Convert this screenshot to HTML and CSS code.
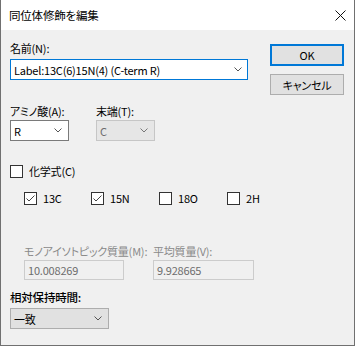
FILE: index.html
```html
<!DOCTYPE html>
<html lang="ja">
<head>
<meta charset="UTF-8"/>
<link rel="stylesheet" href="styles.css">
</head>
<body>
<div class="window">
  <div class="titlebar">
    <span class="title">同位体修飾を編集</span>
    <svg class="close" width="11" height="11" viewBox="0 0 11 11"><path d="M0.5 0.5L10.5 10.5M10.5 0.5L0.5 10.5" stroke="#111" stroke-width="1"/></svg>
  </div>
  <div class="content">
    <div class="toprow">
      <div class="namecol">
        <div class="label">名前(N):</div>
        <div class="combo edit focused">
          <span class="value">Label:13C(6)15N(4) (C-term R)</span>
          <svg class="chev" width="8" height="5" viewBox="0 0 8 5"><path d="M0.5 0.5L4 4L7.5 0.5" fill="none" stroke="#555"/></svg>
        </div>
      </div>
      <div class="buttons">
        <div class="btn default">OK</div>
        <div class="btn">キャンセル</div>
      </div>
    </div>

    <div class="selrow">
      <div class="field">
        <div class="label">アミノ酸(A):</div>
        <div class="combo small edit">
          <span class="value">R</span>
          <svg class="chev" width="8" height="5" viewBox="0 0 8 5"><path d="M0.5 0.5L4 4L7.5 0.5" fill="none" stroke="#555"/></svg>
        </div>
      </div>
      <div class="field">
        <div class="label">末端(T):</div>
        <div class="combo small disabled">
          <span class="value">C</span>
          <svg class="chev" width="8" height="5" viewBox="0 0 8 5"><path d="M0.5 0.5L4 4L7.5 0.5" fill="none" stroke="#777"/></svg>
        </div>
      </div>
    </div>

    <div class="check formula">
      <span class="box"></span>
      <span>化学式(C)</span>
    </div>

    <div class="isotopes">
      <div class="check"><span class="box"><svg width="11" height="11" viewBox="0 0 11 11"><path d="M1.5 5.5L4 8L9.5 2.5" fill="none" stroke="#444" stroke-width="1"/></svg></span><span>13C</span></div>
      <div class="check"><span class="box"><svg width="11" height="11" viewBox="0 0 11 11"><path d="M1.5 5.5L4 8L9.5 2.5" fill="none" stroke="#444" stroke-width="1"/></svg></span><span>15N</span></div>
      <div class="check"><span class="box"></span><span>18O</span></div>
      <div class="check"><span class="box"></span><span>2H</span></div>
    </div>

    <div class="massrow">
      <div class="field mono">
        <div class="label dim">モノアイソトピック質量(M):</div>
        <div class="readonly">10.008269</div>
      </div>
      <div class="field avg">
        <div class="label dim">平均質量(V):</div>
        <div class="readonly">9.928665</div>
      </div>
    </div>

    <div class="label strong">相対保持時間:</div>
    <div class="combo drop">
      <span class="value">一致</span>
      <svg class="chev" width="8" height="5" viewBox="0 0 8 5"><path d="M0.5 0.5L4 4L7.5 0.5" fill="none" stroke="#555"/></svg>
    </div>
  </div>
</div>
</body>
</html>
```

FILE: styles.css
```css
html, body {
	margin:0;
	padding:0;
	background:#f0f0f0;
}
body {
	font-family:"Noto Sans CJK JP", "Noto Sans", sans-serif;
	font-size:11px;
	letter-spacing:-0.2px;
	font-feature-settings:"palt";
	color:#000;
}
.window {
	width:355px;
	height:346px;
	box-sizing:border-box;
	border:1px solid #707070;
	border-top:none;
	background:#f0f0f0;
}
.titlebar {
	height:30px;
	background:#fff;
	display:flex;
	align-items:center;
	justify-content:space-between;
	padding:0 8px 0 8px;
}
.title {
	font-size:11.5px;
	margin-top:-1px;
}
.close {
	margin-top:1px;
}
.content {
	padding:0 9px;
}
.label {
	height:16px;
	line-height:16px;
	white-space:nowrap;
}
.label.dim {
	color:#8a8a8a;
}
.label.strong {
	font-weight:500;
	font-size:11.5px;
	margin-top:9px;
}
.toprow {
	display:flex;
	gap:22px;
	height:65px;
}
.namecol {
	width:238px;
	padding-top:10px;
}
.namecol .combo {
	margin-top:3px;
}
.combo {
	box-sizing:border-box;
	height:21px;
	display:flex;
	align-items:center;
	justify-content:space-between;
	padding:0 5px 0 3px;
	border:1px solid #7a7a7a;
	background:#fff;
}
.combo.focused {
	border-color:#0078d7;
}
.combo .value {
	white-space:nowrap;
}
.combo.small {
	width:59px;
	margin-top:1px;
	padding-right:6px;
}
.combo.disabled {
	background:#e6e6e6;
	border-color:#c6c6c6;
	color:#6d6d6d;
}
.combo.drop {
	width:99px;
	margin-top:3px;
	background:#e1e1e1;
	border-color:#adadad;
	padding-right:6px;
}
.buttons {
	padding-top:14px;
	display:flex;
	flex-direction:column;
	gap:8px;
}
.btn {
	box-sizing:border-box;
	width:74px;
	height:21px;
	border:1px solid #adadad;
	background:#e1e1e1;
	display:flex;
	align-items:center;
	justify-content:center;
}
.btn.default {
	height:22px;
	border:2px solid #0078d7;
}
.selrow {
	display:flex;
	gap:27px;
	margin-top:8px;
}
.selrow .field {
	width:59px;
}
.check {
	display:flex;
	align-items:center;
	height:16px;
	white-space:nowrap;
}
.box {
	box-sizing:border-box;
	width:13px;
	height:13px;
	border:1px solid #333;
	background:#fff;
	margin-right:6px;
	display:flex;
	align-items:center;
	justify-content:center;
}
.formula {
	margin-top:22px;
}
.isotopes {
	display:grid;
	grid-template-columns:67px 68px 68px 68px;
	margin-top:11px;
	padding-left:14px;
}
.massrow {
	display:flex;
	gap:29px;
	margin-top:37px;
	padding-left:14px;
}
.massrow .field {
	width:100px;
}
.readonly {
	box-sizing:border-box;
	width:100px;
	height:20px;
	margin-top:1px;
	border:1px solid #cccccc;
	background:#f0f0f0;
	color:#6d6d6d;
	padding-left:3px;
	line-height:18px;
}
.avg .readonly {
	width:101px;
}
```
